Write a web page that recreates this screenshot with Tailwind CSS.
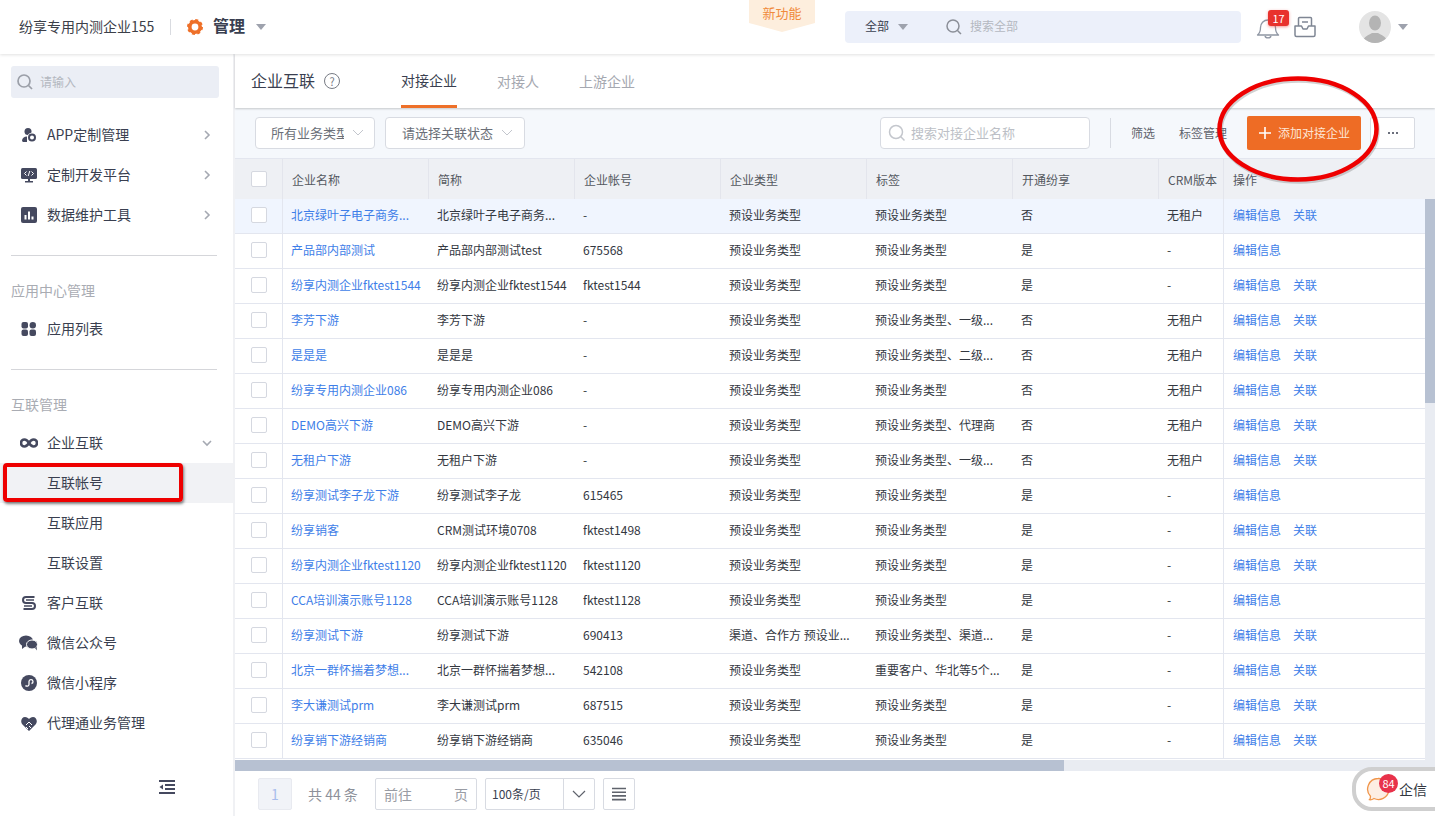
<!DOCTYPE html>
<html lang="zh-CN">
  <head>
    <meta charset="UTF-8" />
    <meta name="viewport" content="width=device-width, initial-scale=1.0" />
    <title>企业互联</title>
    <script src="https://cdn.jsdelivr.net/npm/@tailwindcss/browser@4"></script>
  </head>
  <body class="bg-white overflow-hidden font-['Noto_Sans_CJK_SC','Noto_Sans',sans-serif] text-[#33373f]">
    <div class="relative w-[1435px] h-[816px] flex flex-col overflow-hidden">
      <!-- Top bar -->
      <header class="relative z-10 h-[54px] shrink-0 flex items-center bg-white shadow-[0_1px_3px_rgba(0,0,0,0.12)]">
        <span class="ml-[19px] w-[135px] pb-[2px] text-sm text-[#3c4049] whitespace-nowrap">纷享专用内测企业155</span>
        <span class="ml-[16px] w-px h-4 bg-[#d9dbe0]"></span>
        <svg class="ml-[16px]" width="16" height="16" viewBox="0 0 16 16">
          <circle cx="8" cy="8" r="5.2" fill="none" stroke="#ee7029" stroke-width="3.6" />
          <circle cx="8" cy="8" r="7" fill="none" stroke="#ee7029" stroke-width="2" stroke-dasharray="3 2.5" />
        </svg>
        <span class="ml-[10px] pb-[4px] text-[16px] font-semibold text-[#3a3f50]">管理</span>
        <span class="ml-[11px] w-0 h-0 border-x-[5px] border-x-transparent border-t-[6px] border-t-[#9ea2ad]"></span>
        <div class="ml-[483px] self-start w-[66px] h-[32px] bg-[#fdeedd] text-[#f08a3c] text-[13px] text-center pt-[3px] [clip-path:polygon(0_0,100%_0,100%_72%,50%_100%,0_72%)]">新功能</div>
        <div class="ml-[30px] w-[396px] h-[32px] rounded bg-[#ecf0fa] flex items-center text-xs">
          <span class="ml-[20px] pb-[2px] text-[#3a3f50]">全部</span>
          <span class="ml-[9px] w-0 h-0 border-x-[5px] border-x-transparent border-t-[6px] border-t-[#9ea2ad]"></span>
          <svg class="ml-[37px]" width="18" height="18" viewBox="0 0 18 18" fill="none" stroke="#8b8f98" stroke-width="1.5"><circle cx="8" cy="8" r="6" /><path d="M12.5 12.5l3.5 3.5" /></svg>
          <span class="ml-[7px] pb-[2px] text-[#b4b8c0]">搜索全部</span>
        </div>
        <div class="relative ml-[15px] w-[24px] h-[24px]">
          <svg class="mt-[2px]" width="24" height="24" viewBox="0 0 24 24" fill="none" stroke="#8f96a3" stroke-width="1.3"><path d="M1.500 18c2-1.500 3-3.500 3-7.500 0-4 3-7.500 7.500-7.500s7.500 3.500 7.500 7.500c0 4 1 6 3 7.500z" stroke-linejoin="round" /><path d="M9 19c.5 2.500 5.500 2.500 6 0" /></svg>
          <span class="absolute left-[12px] top-[-5px] w-[21px] h-[16px] rounded-[3px] bg-[#e8322d] text-white text-[11px] leading-[16px] text-center shadow-[0_1px_3px_rgba(232,50,45,0.5)]">17</span>
        </div>
        <svg class="ml-[14px]" width="22" height="22" viewBox="0 0 22 22" fill="none" stroke="#7f8694" stroke-width="1.500"><path d="M4.500 10V2.500a1 1 0 0 1 1-1h11a1 1 0 0 1 1 1V10" /><path d="M1 10h6.500l1.500 3h4l1.500-3H21v9a1.500 1.500 0 0 1-1.500 1.500h-17A1.500 1.500 0 0 1 1 19z" stroke-linejoin="round" /><path d="M8 6h6" /></svg>
        <div class="ml-[43px] w-[32px] h-[32px] rounded-full bg-[#e4e4e4] overflow-hidden">
          <svg width="32" height="32" viewBox="0 0 32 32" fill="#b4b4b4"><ellipse cx="16" cy="12" rx="6" ry="7.500" /><path d="M4 32c0-7 6-8 9-10h6c3 2 9 3 9 10z" /></svg>
        </div>
        <span class="ml-[7px] w-0 h-0 border-x-[5px] border-x-transparent border-t-[6px] border-t-[#9ea2ad]"></span>
      </header>

      <div class="flex-1 flex min-h-0">
        <!-- Sidebar -->
        <aside class="w-[235px] shrink-0 bg-white border-r-2 border-[#f0f1f4] text-sm text-[#3a3f50]">
          <div class="mt-[12px] ml-[11px] w-[208px] h-[32px] rounded-[3px] bg-[#ebeef5] flex items-center">
            <svg class="ml-[5px]" width="18" height="18" viewBox="0 0 18 18" fill="none" stroke="#9b9fa8" stroke-width="1.700"><circle cx="8" cy="8" r="6" /><path d="M12.500 12.500l3.500 3.500" /></svg>
            <span class="ml-[6px] text-xs text-[#b4b8c0]">请输入</span>
          </div>
          <div class="mt-[17px]">
            <div class="h-10 flex items-center pl-[21px] pr-[22px]">
              <svg width="16" height="16" viewBox="0 0 16 16" fill="#45495f"><circle cx="7" cy="4.500" r="3.500" /><path d="M1 14c0-3 2-4.500 5-4.500v5.500H2z" /><circle cx="11" cy="10.500" r="4.800" fill="#fff" /><circle cx="11" cy="10.500" r="3" fill="none" stroke="#45495f" stroke-width="2" /></svg>
              <span class="ml-[10px] pb-[2px]">APP定制管理</span>
              <svg class="ml-auto" width="8" height="12" viewBox="0 0 8 12" fill="none" stroke="#a5a9b2" stroke-width="1.600"><path d="M2 2l4 4-4 4" /></svg>
            </div>
            <div class="h-10 flex items-center pl-[21px] pr-[22px]">
              <svg width="16" height="16" viewBox="0 0 16 16" fill="#45495f"><rect y="1" width="16" height="11" rx="1.500" /><rect x="7" y="12" width="2" height="2" /><rect x="4" y="14" width="8" height="1.500" /><path d="M5.500 4.500L3.500 6.500l2 2M10.500 4.500l2 2-2 2M8.800 4L7.200 9" fill="none" stroke="#fff" stroke-width="1" /></svg>
              <span class="ml-[10px] pb-[2px]">定制开发平台</span>
              <svg class="ml-auto" width="8" height="12" viewBox="0 0 8 12" fill="none" stroke="#a5a9b2" stroke-width="1.600"><path d="M2 2l4 4-4 4" /></svg>
            </div>
            <div class="h-10 flex items-center pl-[21px] pr-[22px]">
              <svg width="16" height="16" viewBox="0 0 16 16"><rect width="16" height="16" rx="2" fill="#45495f" /><path d="M4.500 8v4.500M8 4.500v8M11.500 9.500v3" stroke="#fff" stroke-width="2" /></svg>
              <span class="ml-[10px] pb-[2px]">数据维护工具</span>
              <svg class="ml-auto" width="8" height="12" viewBox="0 0 8 12" fill="none" stroke="#a5a9b2" stroke-width="1.600"><path d="M2 2l4 4-4 4" /></svg>
            </div>
          </div>
          <div class="mt-[20px] ml-[11px] w-[206px] h-px bg-[#d5d6da]"></div>
          <div class="mt-[24px] ml-[11px] h-[20px] leading-[20px] text-[#a9acb3]">应用中心管理</div>
          <div class="mt-[9px] h-10 flex items-center pl-[21px]">
            <svg width="16" height="16" viewBox="0 0 16 16" fill="#45495f"><rect x="0.500" y="1" width="6.500" height="6.500" rx="2" /><circle cx="11.800" cy="4.200" r="3.200" /><rect x="0.500" y="8.500" width="6.500" height="6.500" rx="2" /><rect x="8.500" y="8.500" width="6.500" height="6.500" rx="2" /></svg>
            <span class="ml-[10px] pb-[2px]">应用列表</span>
          </div>
          <div class="mt-[20px] ml-[11px] w-[206px] h-px bg-[#d5d6da]"></div>
          <div class="mt-[24px] ml-[11px] h-[20px] leading-[20px] text-[#a9acb3]">互联管理</div>
          <div class="mt-[9px] h-10 flex items-center pl-[20px] pr-[20px]">
            <svg width="18" height="10" viewBox="0 0 18 10" fill="none" stroke="#45495f" stroke-width="2.600"><path d="M9 5C7.500 2.500 6 1.500 4.500 1.500a3.500 3.500 0 0 0 0 7C6 8.500 7.500 7.500 9 5s3-3.500 4.500-3.500a3.500 3.500 0 0 1 0 7C12 8.500 10.500 7.500 9 5z" /></svg>
            <span class="ml-[9px] pb-[2px]">企业互联</span>
            <svg class="ml-auto" width="12" height="8" viewBox="0 0 12 8" fill="none" stroke="#a5a9b2" stroke-width="1.600"><path d="M2 2l4 4 4-4" /></svg>
          </div>
          <div class="w-[233px] h-10 flex items-center pl-[47px] pb-[2px] bg-[#f1f2f5]">互联帐号</div>
          <div class="h-10 flex items-center pl-[47px] pb-[2px]">互联应用</div>
          <div class="h-10 flex items-center pl-[47px] pb-[2px]">互联设置</div>
          <div class="h-10 flex items-center pl-[21px]">
            <svg width="16" height="16" viewBox="0 0 16 16" fill="none" stroke="#45495f" stroke-width="2"><path d="M13.500 2H5a3 3 0 0 0 0 6h6a3 3 0 0 1 0 6H2.500" /><path d="M5 5h8M3 11h8" stroke-width="1.300" /></svg>
            <span class="ml-[10px] pb-[2px]">客户互联</span>
          </div>
          <div class="h-10 flex items-center pl-[19px]">
            <svg width="19" height="16" viewBox="0 0 19 16" fill="#45495f"><ellipse cx="7" cy="6" rx="7" ry="5.500" /><path d="M3 10l0 4 4-3z" /><ellipse cx="13" cy="9.500" rx="5.500" ry="4.500" stroke="#fff" stroke-width="1" /><path d="M16 13l2 2.500-.5-4z" /></svg>
            <span class="ml-[9px] pb-[2px]">微信公众号</span>
          </div>
          <div class="h-10 flex items-center pl-[21px]">
            <svg width="16" height="16" viewBox="0 0 16 16"><circle cx="8" cy="8" r="8" fill="#45495f" /><path d="M4.500 10.500a2 2 0 0 0 3.500-1V6.500a2 2 0 1 1 2.500 2" fill="none" stroke="#fff" stroke-width="1.300" /></svg>
            <span class="ml-[10px] pb-[2px]">微信小程序</span>
          </div>
          <div class="h-10 flex items-center pl-[21px]">
            <svg width="16" height="15" viewBox="0 0 16 15"><path d="M8 15L1 8C-1 5 1 1 4 1c2 0 3 1 4 2 1-1 2-2 4-2 3 0 5 4 3 7z" fill="#45495f" /><path d="M5 9l3-3 3 3M5 11l2 2M8 10l2 2" fill="none" stroke="#fff" stroke-width="1" /></svg>
            <span class="ml-[10px] pb-[2px]">代理通业务管理</span>
          </div>
          <svg class="mt-[37px] ml-[159px]" width="16" height="14" viewBox="0 0 16 14" fill="#45495f"><rect width="16" height="2" /><rect x="6" y="4" width="10" height="2" /><rect x="6" y="8" width="10" height="2" /><rect y="12" width="16" height="2" /><path d="M4 4.500v5L0.500 7z" /></svg>
        </aside>

        <!-- Main -->
        <main class="flex-1 min-w-0 flex flex-col">
          <div class="relative z-[1] h-[54px] shrink-0 flex bg-white shadow-[0_1px_2px_rgba(0,0,0,0.2)]">
            <div class="ml-[16px] flex items-center">
              <span class="pb-[2px] text-[16px] text-[#3a3f50]">企业互联</span>
              <span class="ml-[9px] w-[16px] h-[16px] rounded-full border border-[#777b84] text-[11px] leading-[14px] text-center text-[#777b84]">?</span>
            </div>
            <div class="ml-[61px] h-full flex items-center text-sm text-[#3a3f50] border-b-[3px] border-[#ee7029] pt-[1px]">对接企业</div>
            <div class="ml-[40px] flex items-center text-sm text-[#a5a8b0]">对接人</div>
            <div class="ml-[40px] flex items-center text-sm text-[#a5a8b0]">上游企业</div>
          </div>

          <div class="h-[51px] shrink-0 flex items-center bg-[#f5f8fc] border-b border-[#e3e6ef] text-xs">
            <div class="ml-[20px] w-[120px] h-[32px] rounded bg-white border border-[#d8dbe2] flex items-center text-[#6b6f78] pl-[15px] text-[13px]">
              <span class="w-[73px] overflow-hidden whitespace-nowrap">所有业务类型</span>
              <svg class="ml-[8px]" width="12" height="8" viewBox="0 0 12 8" fill="none" stroke="#c3c6cd"><path d="M1 1l5 5 5-5" /></svg>
            </div>
            <div class="ml-[10px] w-[140px] h-[32px] rounded bg-white border border-[#d8dbe2] flex items-center text-[#6b6f78] pl-[16px] text-[13px]">
              <span class="whitespace-nowrap">请选择关联状态</span>
              <svg class="ml-[8px]" width="12" height="8" viewBox="0 0 12 8" fill="none" stroke="#c3c6cd"><path d="M1 1l5 5 5-5" /></svg>
            </div>
            <div class="ml-[355px] w-[210px] h-[32px] rounded bg-white border border-[#d8dbe2] flex items-center">
              <svg class="ml-[7px]" width="18" height="18" viewBox="0 0 18 18" fill="none" stroke="#c4c7cd" stroke-width="1.500"><circle cx="8" cy="8" r="6.500" /><path d="M12.800 12.800l3.700 3.700" /></svg>
              <span class="ml-[5px] text-[13px] text-[#bcbfc6]">搜索对接企业名称</span>
            </div>
            <span class="ml-[20px] w-px h-[30px] bg-[#d8dbe2]"></span>
            <span class="ml-[20px] text-[#5f636c]">筛选</span>
            <span class="ml-[24px] text-[#5f636c] whitespace-nowrap">标签管理</span>
            <button class="ml-[20px] w-[114px] h-[34px] rounded-[2px] bg-[#ee6c25] text-[#fde6d6] flex items-center justify-center">
              <svg width="14" height="14" viewBox="0 0 14 14" stroke="#fff" stroke-width="1.600"><path d="M7 1v12M1 7h12" /></svg>
              <span class="ml-[6px]">添加对接企业</span>
            </button>
            <div class="ml-[9px] w-[45px] h-[32px] rounded-[2px] bg-white border border-[#d8dbe2] flex items-center justify-center gap-[2px]">
              <span class="w-[2px] h-[2px] bg-[#3a3f50] rounded-full"></span>
              <span class="w-[2px] h-[2px] bg-[#3a3f50] rounded-full"></span>
              <span class="w-[2px] h-[2px] bg-[#3a3f50] rounded-full"></span>
            </div>
          </div>

          <!-- Table -->
          <div class="h-[40px] shrink-0 grid grid-cols-[47px_146px_146px_146px_146px_146px_146px_65px_1fr] bg-[#eef0f4] text-xs text-[#54585f]">
            <div class="flex items-center pl-[16px]"><span class="w-4 h-4 rounded-[2px] bg-white border border-[#d5d8e0]"></span></div>
            <div class="flex items-center pl-[9px] pt-[2px] border-l border-[#e3e5ec]">企业名称</div>
            <div class="flex items-center pl-[9px] pt-[2px] border-l border-[#e3e5ec]">简称</div>
            <div class="flex items-center pl-[9px] pt-[2px] border-l border-[#e3e5ec]">企业帐号</div>
            <div class="flex items-center pl-[9px] pt-[2px] border-l border-[#e3e5ec]">企业类型</div>
            <div class="flex items-center pl-[9px] pt-[2px] border-l border-[#e3e5ec]">标签</div>
            <div class="flex items-center pl-[9px] pt-[2px] border-l border-[#e3e5ec]">开通纷享</div>
            <div class="flex items-center pl-[9px] pt-[2px] border-l border-[#e3e5ec] whitespace-nowrap">CRM版本</div>
            <div class="flex items-center pl-[9px] pt-[2px] border-l border-[#e3e5ec]">操作</div>
          </div>
          <div class="flex-1 min-h-0 flex">
            <div class="w-[1190px] flex flex-col">
              <div id="rows" class="h-[561px] overflow-hidden text-xs"></div>
              <div class="h-[11px] bg-[#e9ecf2] shrink-0"><div class="w-[829px] h-full bg-[#b7c1d2]"></div></div>
            </div>
            <div class="w-[10px] bg-[#e9ecf2] h-[570px]"><div class="h-[204px] bg-[#b7c1d2]"></div></div>
          </div>

          <!-- Pagination -->
          <footer class="h-[45px] shrink-0 flex items-center bg-white text-xs text-[#8d919a]">
            <span class="ml-[23px] w-[34px] h-[32px] rounded-[2px] bg-[#f1f3f8] border border-[#e8eaf0] text-center leading-[30px] text-sm text-[#a7bcec]">1</span>
            <span class="ml-[16px] w-[51px] text-sm whitespace-nowrap">共 44 条</span>
            <div class="ml-[16px] w-[102px] h-[32px] rounded-[2px] border border-[#d8dbe2] flex items-center justify-between px-[8px] text-sm text-[#999ca4]"><span>前往</span><span>页</span></div>
            <div class="ml-[8px] w-[110px] h-[32px] rounded-[2px] border border-[#d8dbe2] flex items-center text-[#3a3f50]">
              <span class="ml-[6px] w-[71px]">100条/页</span>
              <span class="w-[31px] h-full border-l border-[#d8dbe2] flex items-center justify-center">
                <svg width="14" height="8" viewBox="0 0 14 8" fill="none" stroke="#5f636c" stroke-width="1.200"><path d="M1 1l6 6 6-6" /></svg>
              </span>
            </div>
            <div class="ml-[8px] w-[32px] h-[32px] rounded-[2px] border border-[#d8dbe2] flex items-center justify-center">
              <svg width="14" height="14" viewBox="0 0 14 14" stroke="#5f636c" stroke-width="1.600"><path d="M0 1.500h14M0 5.200h14M0 8.900h14M0 12.600h14" /></svg>
            </div>
          </footer>
        </main>
      </div>

      <!-- Floating chat button -->
      <div class="absolute z-20 left-[1352px] top-[767px] w-[100px] h-[44px] rounded-l-[20px] border-4 border-[#cfcfcf] bg-white flex items-center">
        <svg class="ml-[10px]" width="24" height="26" viewBox="0 0 24 26"><path d="M12 2.500a10.500 10.500 0 1 1-4 20c-1.500 1-3 1.500-4.500 1.200 1-1 1-2.200 1-3.500A10.500 10.500 0 0 1 12 2.500z" fill="#fdeee3" stroke="#f0954a" stroke-width="1.300" /></svg>
        <span class="ml-[9px] text-sm text-[#33373f]">企信</span>
        <span class="absolute left-[23px] top-[3px] w-[19px] h-[19px] rounded-full bg-[#e8324a] text-white text-[11px] leading-[19px] text-center">84</span>
      </div>

      <!-- Red annotation marks -->
      <div class="absolute z-20 left-[3px] top-[463px] w-[180px] h-[39px] rounded-[4px] border-[4px] border-[#ee0000] shadow-[1px_2px_3px_rgba(0,0,0,0.5)]"></div>
      <svg class="absolute z-20 left-[1205px] top-[66px]" width="190" height="126" viewBox="0 0 190 126">
        <ellipse cx="93" cy="63" rx="78.500" ry="50.500" fill="none" stroke="#7a7a7a" stroke-opacity="0.35" stroke-width="4.500" transform="translate(1 2)" />
        <ellipse cx="93" cy="63" rx="78.500" ry="50.500" fill="none" stroke="#ee0000" stroke-width="4.500" />
      </svg>
    </div>

    <script>
      // name, short name, account, type, tag, opened, crm, has "关联" link
      const data = [
        ["北京绿叶子电子商务...", "北京绿叶子电子商务...", "-", "预设业务类型", "预设业务类型", "否", "无租户", 1],
        ["产品部内部测试", "产品部内部测试test", "675568", "预设业务类型", "预设业务类型", "是", "-", 0],
        ["纷享内测企业fktest1544", "纷享内测企业fktest1544", "fktest1544", "预设业务类型", "预设业务类型", "是", "-", 1],
        ["李芳下游", "李芳下游", "-", "预设业务类型", "预设业务类型、一级...", "否", "无租户", 1],
        ["是是是", "是是是", "-", "预设业务类型", "预设业务类型、二级...", "否", "无租户", 1],
        ["纷享专用内测企业086", "纷享专用内测企业086", "-", "预设业务类型", "预设业务类型", "否", "无租户", 1],
        ["DEMO高兴下游", "DEMO高兴下游", "-", "预设业务类型", "预设业务类型、代理商", "否", "无租户", 1],
        ["无租户下游", "无租户下游", "-", "预设业务类型", "预设业务类型、一级...", "否", "无租户", 1],
        ["纷享测试李子龙下游", "纷享测试李子龙", "615465", "预设业务类型", "预设业务类型", "是", "-", 0],
        ["纷享销客", "CRM测试环境0708", "fktest1498", "预设业务类型", "预设业务类型", "是", "-", 1],
        ["纷享内测企业fktest1120", "纷享内测企业fktest1120", "fktest1120", "预设业务类型", "预设业务类型", "是", "-", 1],
        ["CCA培训演示账号1128", "CCA培训演示账号1128", "fktest1128", "预设业务类型", "预设业务类型", "是", "-", 0],
        ["纷享测试下游", "纷享测试下游", "690413", "渠道、合作方 预设业...", "预设业务类型、渠道...", "是", "-", 1],
        ["北京一群怀揣着梦想...", "北京一群怀揣着梦想...", "542108", "预设业务类型", "重要客户、华北等5个...", "是", "-", 1],
        ["李大谦测试prm", "李大谦测试prm", "687515", "预设业务类型", "预设业务类型", "是", "-", 1],
        ["纷享销下游经销商", "纷享销下游经销商", "635046", "预设业务类型", "预设业务类型", "是", "-", 1],
      ];
      const rowClass = "h-[35px] grid grid-cols-[47px_146px_146px_146px_146px_146px_146px_65px_1fr] border-b border-[#e3e6ef] items-center whitespace-nowrap";
      document.getElementById("rows").innerHTML = data.map((r, i) => `
        <div class="${rowClass} ${i === 0 ? "bg-[#f0f5fe]" : "bg-white"}">
          <div class="pl-[16px] pb-[2px] h-full flex items-center"><span class="w-4 h-4 rounded-[2px] bg-white border border-[#d5d8e0]"></span></div>
          <div class="pl-[8px] pb-[2px] h-full flex items-center border-l border-[#e3e6ef] text-[#3e7ee8]">${r[0]}</div>
          <div class="pl-[9px] pb-[2px]">${r[1]}</div>
          <div class="pl-[9px] pb-[2px]">${r[2]}</div>
          <div class="pl-[9px] pb-[2px]">${r[3]}</div>
          <div class="pl-[9px] pb-[2px]">${r[4]}</div>
          <div class="pl-[9px] pb-[2px]">${r[5]}</div>
          <div class="pl-[9px] pb-[2px]">${r[6]}</div>
          <div class="pl-[9px] pb-[2px] h-full flex items-center border-l border-[#e3e6ef] text-[#3e7ee8] gap-[12px]"><span>编辑信息</span>${r[7] ? "<span>关联</span>" : ""}</div>
        </div>`).join("");
    </script>
  </body>
</html>
